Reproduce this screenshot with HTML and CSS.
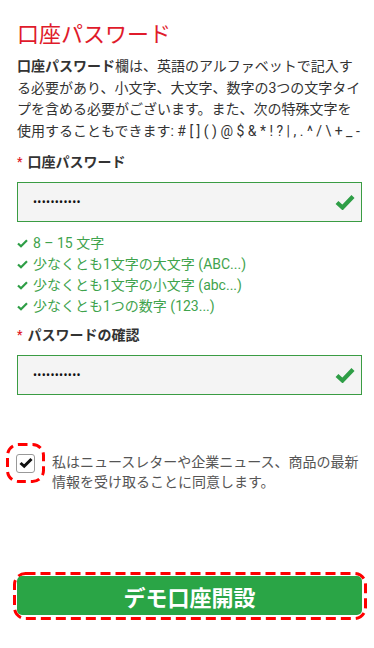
FILE: index.html
```html
<!DOCTYPE html>
<html lang="ja">
<head>
  <meta charset="UTF-8">
  <title>口座パスワード</title>
  <link rel="stylesheet" href="styles.css">
</head>
<body>
  <h2 class="title">口座パスワード</h2>
  <p class="intro"><b>口座パスワード</b>欄は、英語のアルファベットで記入する必要があり、小文字、大文字、数字の3つの文字タイプを含める必要がございます。また、次の特殊文字を<span class="symbols">使用することもできます: # [ ] ( ) @ $ &amp; * ! ? | , . ^ / \ + _ -</span></p>

  <form>
    <label class="field-label"><span class="req">*</span>口座パスワード</label>
    <div class="field">
      <input type="password" value="Abcdefg1234" readonly>
      <svg class="ok" width="20" height="16" viewBox="0 0 20 16"><path d="M2 8.5 L7.5 13.5 L18 2.5" fill="none" stroke="#2e9e46" stroke-width="4.2"/></svg>
    </div>

    <ul class="rules">
      <li><svg width="11" height="9" viewBox="0 0 11 9"><path d="M1 4.5 L4 7.3 L10 1.3" fill="none" stroke="#2e9e46" stroke-width="2.2"/></svg>8 – 15 文字</li>
      <li><svg width="11" height="9" viewBox="0 0 11 9"><path d="M1 4.5 L4 7.3 L10 1.3" fill="none" stroke="#2e9e46" stroke-width="2.2"/></svg>少なくとも1文字の大文字 (ABC...)</li>
      <li><svg width="11" height="9" viewBox="0 0 11 9"><path d="M1 4.5 L4 7.3 L10 1.3" fill="none" stroke="#2e9e46" stroke-width="2.2"/></svg>少なくとも1文字の小文字 (abc...)</li>
      <li><svg width="11" height="9" viewBox="0 0 11 9"><path d="M1 4.5 L4 7.3 L10 1.3" fill="none" stroke="#2e9e46" stroke-width="2.2"/></svg>少なくとも1つの数字 (123...)</li>
    </ul>

    <label class="field-label"><span class="req">*</span>パスワードの確認</label>
    <div class="field">
      <input type="password" value="Abcdefg1234" readonly>
      <svg class="ok" width="20" height="16" viewBox="0 0 20 16"><path d="M2 8.5 L7.5 13.5 L18 2.5" fill="none" stroke="#2e9e46" stroke-width="4.2"/></svg>
    </div>

    <div class="agree">
      <span class="mark">
        <span class="box"><svg width="14" height="12" viewBox="0 0 14 12"><path d="M1.5 6 L5.2 9.3 L12.5 2" fill="none" stroke="#111" stroke-width="3"/></svg></span>
      </span>
      <span class="agree-text">私はニュースレターや企業ニュース、商品の最新情報を受け取ることに同意します。</span>
    </div>

    <div class="cta">
      <button type="button" class="submit-btn">デモ口座開設</button>
    </div>
  </form>
</body>
</html>
```

FILE: styles.css
```css
body {
  margin: 0;
  padding: 22px 12px 0 17px;
  font-family: Roboto, "Noto Sans CJK JP", sans-serif;
  color: #333;
  background: #fff;
}
.title {
  margin: 0 0 8px;
  font-size: 22px;
  font-weight: normal;
  line-height: 26px;
  color: #e01b2b;
}
.intro {
  margin: 0 0 10px;
  font-size: 14px;
  line-height: 21.5px;
}
.intro b {
  font-weight: bold;
}
.symbols {
  white-space: nowrap;
}
.field-label {
  display: block;
  font-size: 14px;
  font-weight: bold;
  line-height: 20px;
  margin-bottom: 10px;
}
.req {
  color: #e01b2b;
  font-size: 12px;
  margin-right: 5px;
  vertical-align: 1px;
}
.field {
  height: 40px;
  box-sizing: border-box;
  border: 1px solid #3a9c43;
  background: #f4f4f4;
  display: flex;
  align-items: center;
  padding: 0 6px 0 15px;
}
.field input {
  flex: 1;
  border: none;
  background: transparent;
  font-family: Roboto, sans-serif;
  font-size: 12px;
  color: #111;
  outline: none;
  padding: 0;
  letter-spacing: 0.3px;
}
.ok {
  display: block;
}
.rules {
  list-style: none;
  margin: 11px 0 8px;
  padding: 0;
  font-size: 14px;
  line-height: 21px;
  color: #3fa34d;
}
.rules li {
  display: flex;
  align-items: center;
}
.rules svg {
  margin-right: 5px;
}
.agree {
  display: flex;
  align-items: flex-start;
  margin-top: 48px;
}
.mark {
  width: 39px;
  height: 40px;
  margin-left: -11px;
  display: flex;
  align-items: center;
  justify-content: center;
  flex-shrink: 0;
  background: url("data:image/svg+xml,%3Csvg xmlns='http://www.w3.org/2000/svg' width='39' height='40'%3E%3Crect x='1.5' y='1.5' width='36' height='37' rx='11' fill='none' stroke='%23f00' stroke-width='3' stroke-dasharray='9 5'/%3E%3C/svg%3E") no-repeat;
}
.box {
  width: 17px;
  height: 17px;
  border: 1px solid #999;
  border-radius: 3px;
  background: #fff;
  display: flex;
  align-items: center;
  justify-content: center;
}
.agree-text {
  margin: 9px 0 0 7px;
  font-size: 14px;
  line-height: 20px;
  color: #555;
}
.cta {
  margin: 80px -5px 0 -4px;
  padding: 4px 5px 5px 4px;
  background: url("data:image/svg+xml,%3Csvg xmlns='http://www.w3.org/2000/svg' width='354' height='48'%3E%3Crect x='1.5' y='1.5' width='351' height='45' rx='11' fill='none' stroke='%23f00' stroke-width='3' stroke-dasharray='10 5'/%3E%3C/svg%3E") no-repeat;
}
.submit-btn {
  display: block;
  width: 100%;
  height: 39px;
  border: none;
  border-radius: 5px;
  background: #2aa546;
  color: #fff;
  font-family: Roboto, "Noto Sans CJK JP", sans-serif;
  font-size: 22px;
  font-weight: bold;
  cursor: pointer;
}
```
